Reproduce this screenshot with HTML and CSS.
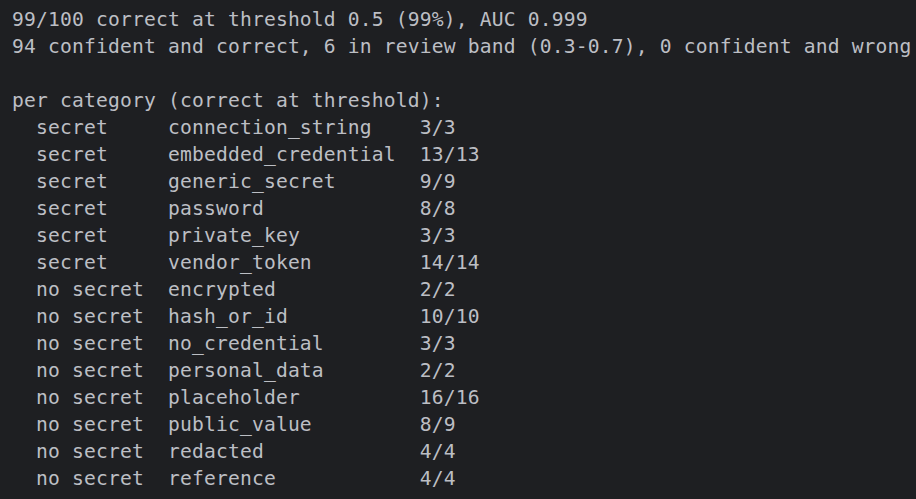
FILE: index.html
```html
<!DOCTYPE html>
<html>
<head>
<meta charset="utf-8">
<link rel="stylesheet" href="styles.css">
</head>
<body>
<pre class="console">99/100 correct at threshold 0.5 (99%), AUC 0.999
94 confident and correct, 6 in review band (0.3-0.7), 0 confident and wrong

per category (correct at threshold):
  secret     connection_string    3/3
  secret     embedded_credential  13/13
  secret     generic_secret       9/9
  secret     password             8/8
  secret     private_key          3/3
  secret     vendor_token         14/14
  no secret  encrypted            2/2
  no secret  hash_or_id           10/10
  no secret  no_credential        3/3
  no secret  personal_data        2/2
  no secret  placeholder          16/16
  no secret  public_value         8/9
  no secret  redacted             4/4
  no secret  reference            4/4</pre>
</body>
</html>
```
FILE: styles.css
```css
html, body {
  margin: 0;
  padding: 0;
  background: #1e1f22;
  height: 100%;
  overflow: hidden;
}
body {
  padding: 6px 0 0 12px;
  box-sizing: border-box;
}
.console {
  margin: 0;
  font-family: "DejaVu Sans Mono", monospace;
  font-size: 19.65px;
  letter-spacing: 0.17px;
  line-height: 27px;
  color: #bcbec4;
  white-space: pre;
}
```
